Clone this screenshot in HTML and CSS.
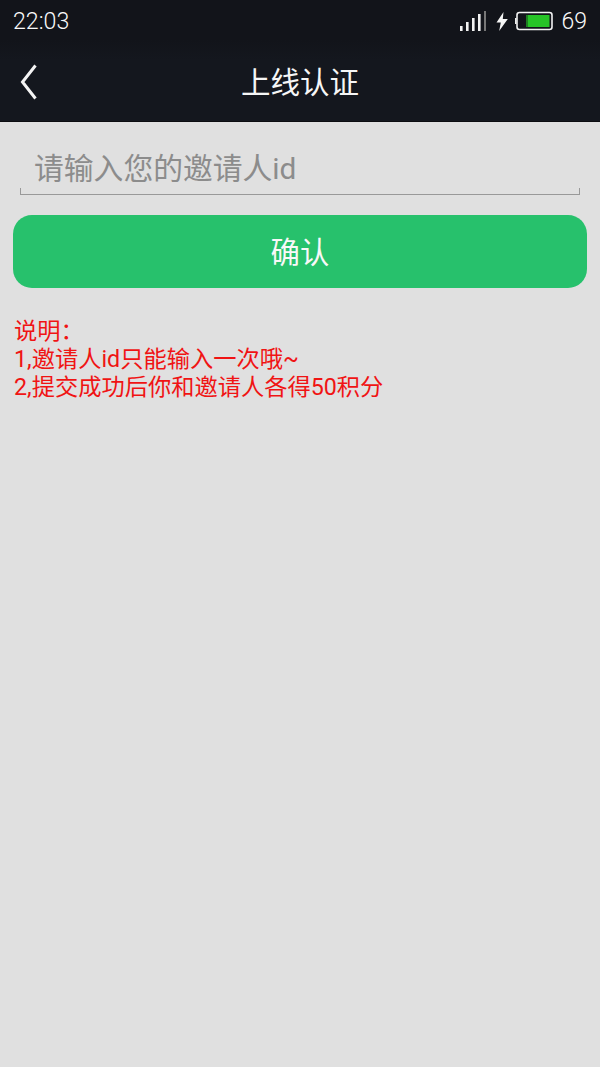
FILE: index.html
```html
<!DOCTYPE html>
<html lang="zh-CN">
<head>
<meta charset="utf-8">
<title>上线认证</title>
<link rel="stylesheet" href="styles.css">
</head>
<body>
<div class="topbar">
  <div class="status">
    <span class="time">22:03</span>
    <div class="status-right">
      <svg class="signal" width="27" height="22" viewBox="0 0 27 22">
        <rect x="1" y="16" width="2.6" height="5" fill="#f2f2f2"/>
        <rect x="7" y="12" width="2.6" height="9" fill="#f2f2f2"/>
        <rect x="13" y="8" width="2.6" height="13" fill="#f2f2f2"/>
        <rect x="19" y="4" width="2.6" height="17" fill="#f2f2f2"/>
        <rect x="25" y="1" width="2" height="20" fill="#777"/>
      </svg>
      <svg class="bolt" width="12" height="19" viewBox="0 0 12 19">
        <path d="M7.5 0 L0.5 10.5 H4.8 L3.2 19 L11.8 7 H6.8 Z" fill="#f5f5f5"/>
      </svg>
      <svg class="battery" width="38" height="20" viewBox="0 0 38 20">
        <rect x="0" y="7" width="1.5" height="6" fill="#eee"/>
        <rect x="2" y="1.5" width="35" height="17" rx="2.5" fill="none" stroke="#f2f2f2" stroke-width="1.6"/>
        <rect x="13" y="4" width="21.5" height="12" fill="#27c427"/>
        <rect x="11" y="4" width="2" height="12" fill="#27c427" opacity="0.6"/>
      </svg>
      <span class="level">69</span>
    </div>
  </div>
  <header class="nav">
    <svg class="back" width="20" height="38" viewBox="0 0 20 38">
      <path d="M16.5 2.5 L3.5 19 L16.5 35.5" fill="none" stroke="#f4f4f4" stroke-width="3"/>
    </svg>
    <h1 class="title">上线认证</h1>
  </header>
</div>
<main class="content">
  <div class="field">
    <span class="placeholder">请输入您的邀请人id</span>
  </div>
  <button class="confirm" type="button">确认</button>
  <div class="notes">
    <p>说明：</p>
    <p>1,邀请人id只能输入一次哦~</p>
    <p>2,提交成功后你和邀请人各得50积分</p>
  </div>
</main>
</body>
</html>
```
FILE: styles.css
```css
* {
  box-sizing: border-box;
}
html, body {
  margin: 0;
  padding: 0;
}
body {
  width: 600px;
  height: 1067px;
  overflow: hidden;
  background: #e0e0e0;
  font-family: Roboto, "Noto Sans CJK SC", sans-serif;
}
.topbar {
  height: 122px;
  background: linear-gradient(#12141a 0, #12141a 40px, #14171e 60px, #14171e 100%);
  border-bottom: 1px solid #0c0d11;
}
.status {
  height: 42px;
  display: flex;
  align-items: center;
  justify-content: space-between;
  padding: 0 13px;
  color: #fafafa;
  font-weight: 300;
}
.time {
  font-size: 23.2px;
}
.status-right {
  display: flex;
  align-items: center;
}
.signal {
  margin-right: 10px;
}
.bolt {
  margin-right: 7px;
}
.battery {
  margin-right: 8px;
}
.level {
  font-size: 23px;
}
.nav {
  position: relative;
  height: 79px;
  display: flex;
  align-items: center;
  justify-content: center;
}
.back {
  position: absolute;
  left: 19px;
  top: 21px;
}
.title {
  margin: -3px 0 0;
  color: #f6f6f6;
  font-size: 29.5px;
  font-weight: 400;
}
.content {
  padding: 0 13px;
}
.field {
  height: 73px;
  margin: 0 7px;
  padding: 25px 0 0 13px;
  border: solid #999;
  border-width: 0 1px 1px;
  border-image: linear-gradient(transparent 0, transparent 66px, #999 66px) 1;
}
.placeholder {
  display: block;
  color: #8c8c8c;
  font-size: 29.8px;
  line-height: 44px;
}
.confirm {
  display: block;
  width: 100%;
  height: 73px;
  margin-top: 20px;
  padding: 0 0 3px;
  border: 0;
  border-radius: 19px;
  background: #27c16c;
  color: #f8f8f8;
  font: inherit;
  font-size: 29.4px;
}
.notes {
  margin-top: 29px;
  margin-left: 1px;
  color: #f01414;
  font-size: 23.25px;
  line-height: 28px;
}
.notes p {
  margin: 0;
}
```
